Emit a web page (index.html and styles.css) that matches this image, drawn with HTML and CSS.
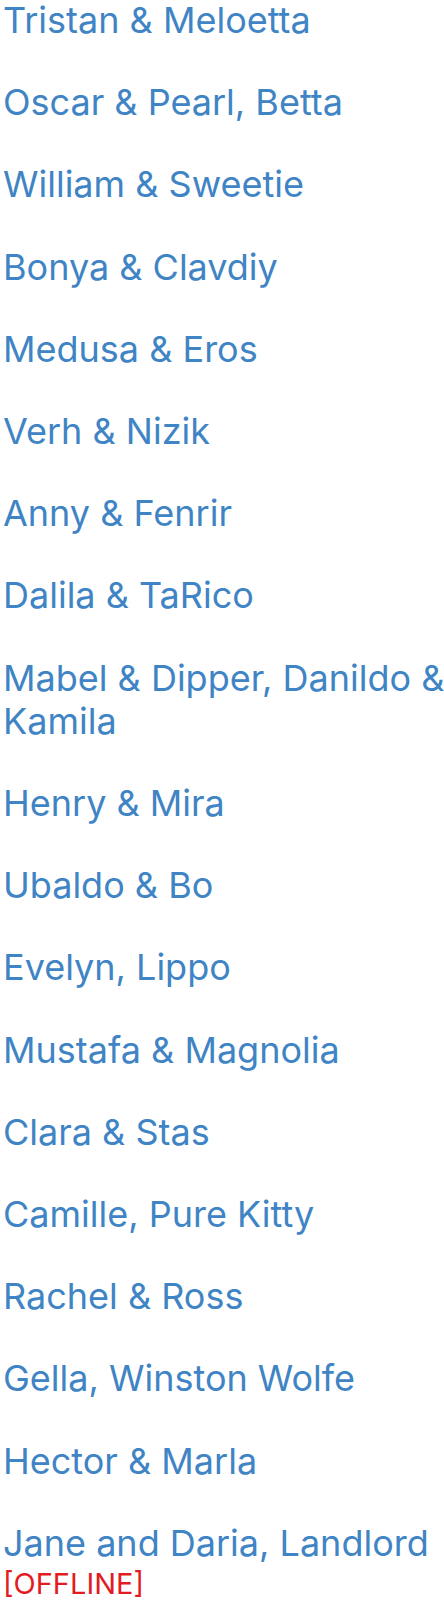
FILE: index.html
```html
<!DOCTYPE html>
<html>
<head>
<meta charset="utf-8">
<link rel="stylesheet" href="styles.css">
</head>
<body>
<ul class="pairs">
  <li class="pair"><a class="name">Tristan &amp; Meloetta</a></li>
  <li class="pair"><a class="name">Oscar &amp; Pearl, Betta</a></li>
  <li class="pair"><a class="name">William &amp; Sweetie</a></li>
  <li class="pair"><a class="name">Bonya &amp; Clavdiy</a></li>
  <li class="pair"><a class="name">Medusa &amp; Eros</a></li>
  <li class="pair"><a class="name">Verh &amp; Nizik</a></li>
  <li class="pair"><a class="name">Anny &amp; Fenrir</a></li>
  <li class="pair"><a class="name">Dalila &amp; TaRico</a></li>
  <li class="pair"><a class="name">Mabel &amp; Dipper, Danildo &amp; Kamila</a></li>
  <li class="pair"><a class="name">Henry &amp; Mira</a></li>
  <li class="pair"><a class="name">Ubaldo &amp; Bo</a></li>
  <li class="pair"><a class="name">Evelyn, Lippo</a></li>
  <li class="pair"><a class="name">Mustafa &amp; Magnolia</a></li>
  <li class="pair"><a class="name">Clara &amp; Stas</a></li>
  <li class="pair"><a class="name">Camille, Pure Kitty</a></li>
  <li class="pair"><a class="name">Rachel &amp; Ross</a></li>
  <li class="pair"><a class="name">Gella, Winston Wolfe</a></li>
  <li class="pair"><a class="name">Hector &amp; Marla</a></li>
  <li class="pair"><a class="name">Jane and Daria, Landlord</a><span class="status">[OFFLINE]</span></li>
</ul>
</body>
</html>
```

FILE: styles.css
```css
html, body {
  margin: 0;
  padding: 0;
  background: #ffffff;
  overflow-x: hidden;
}
.pairs {
  list-style: none;
  margin: -1px 0 0 0;
  padding: 0 0 0 3px;
  display: flex;
  flex-direction: column;
  gap: 39px;
}
.pair {
  display: flex;
  flex-direction: column;
}
.name {
  margin-right: -10px;
  font-family: Inter, "Liberation Sans", sans-serif;
  font-size: 36px;
  line-height: 43.2px;
  color: #3f84c4;
}
.status {
  font-family: Inter, "Liberation Sans", sans-serif;
  font-size: 29px;
  font-weight: 400;
  line-height: 38px;
  color: #e31b23;
}
```
